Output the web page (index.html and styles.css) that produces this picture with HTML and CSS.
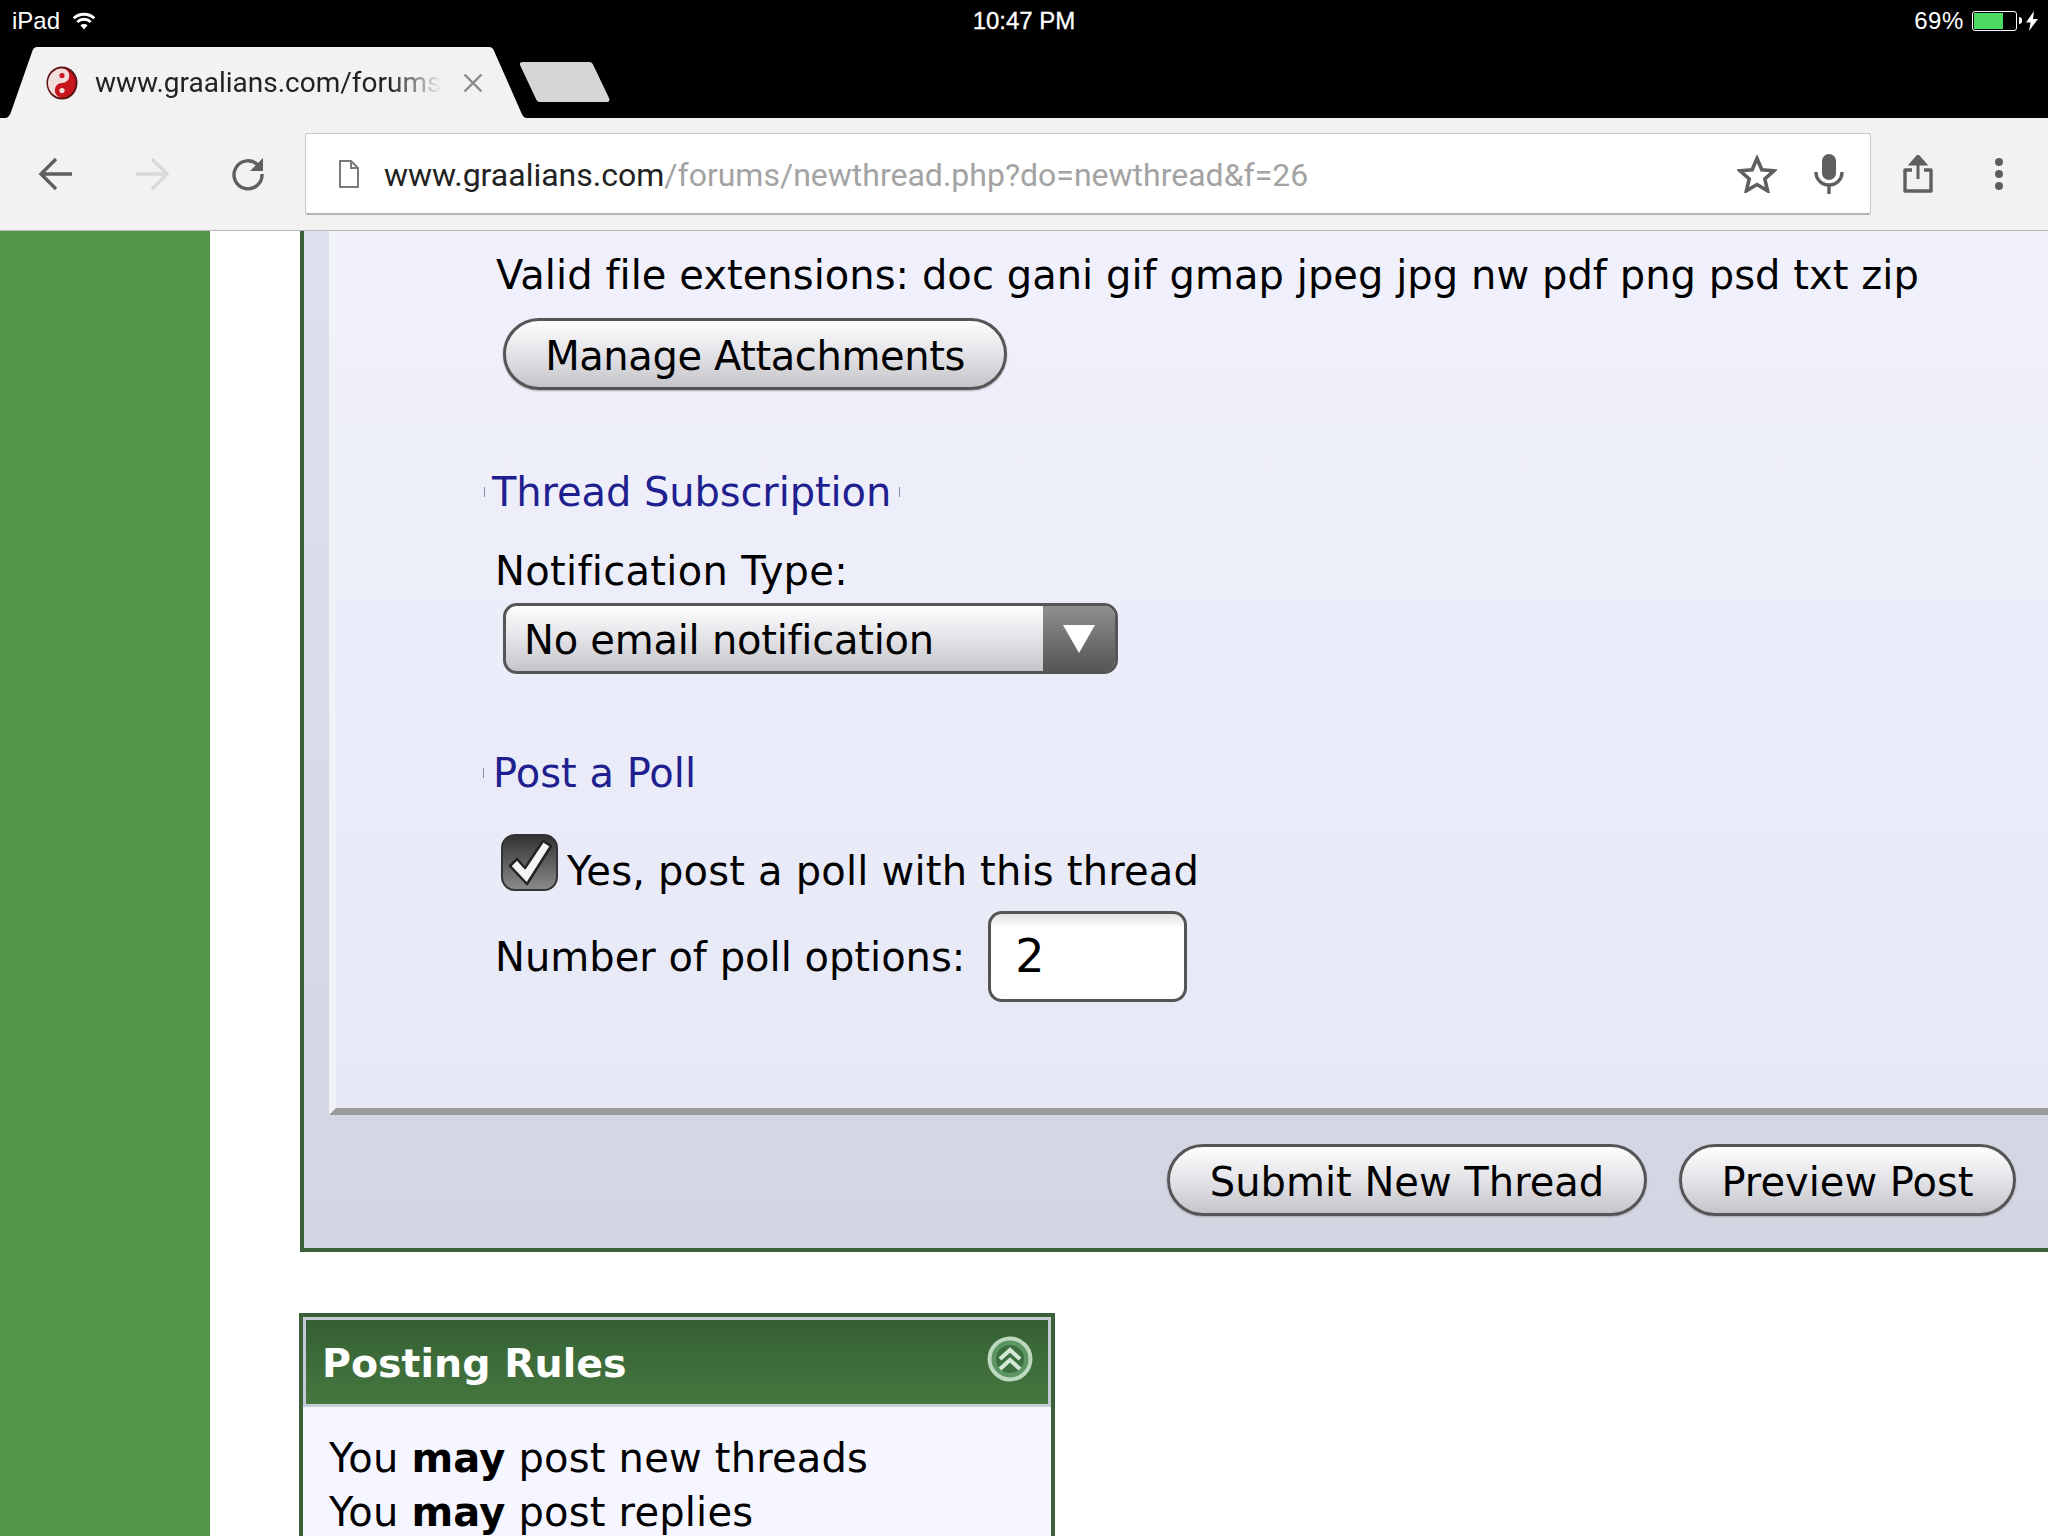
FILE: index.html
```html
<!DOCTYPE html>
<html lang="en">
<head>
<meta charset="utf-8">
<title>Post New Thread</title>
<link rel="stylesheet" href="styles.css">
</head>
<body>
<div class="device">
  <header class="status">
    <div class="status-left">
      <span>iPad</span>
      <svg class="wifi" width="26" height="21" viewBox="0 0 24 20"><path d="M12 18.500 8.600 14.600a5 5 0 0 1 6.800 0Z" fill="#fff"/><path d="M5.600 11.400a9.400 9.400 0 0 1 12.800 0M2.200 7.900a14.400 14.400 0 0 1 19.600 0" fill="none" stroke="#fff" stroke-width="2.800"/></svg>
    </div>
    <div class="status-time">10:47 PM</div>
    <div class="status-right">
      <span>69%</span>
      <div class="battery"><div class="battery-fill"></div></div>
      <div class="battery-tip"></div>
      <svg class="bolt" width="12" height="20" viewBox="0 0 12 20"><path d="M8 0 0 11.500h4.600L3 20l9-12H7Z" fill="#fff"/></svg>
    </div>
  </header>

  <div class="tabstrip">
    <div class="tab">
      <svg class="tab-shape" width="530" height="71" viewBox="0 0 530 71"><path d="M0 71q4 0 6-6L27 5q1.500-5 5-5H484q4 0 5.500 5L516 65q2 6 6 6Z" fill="#f2f2f2"/></svg>
      <svg class="favicon" width="32" height="34" viewBox="0 0 32 34"><ellipse cx="16" cy="17" rx="15.500" ry="16.500" fill="#5b1414"/><ellipse cx="16" cy="17" rx="13.500" ry="14.500" fill="#c8141c"/><path d="M16 2.500a7.200 7.200 0 0 1 0 14.500 7.200 7.200 0 0 0 0 14.500A14 14.500 0 0 0 16 2.500Z" fill="#f3dede" transform="rotate(180 16 17)"/><circle cx="16" cy="9.500" r="2.600" fill="#c8141c"/><circle cx="16" cy="24.500" r="2.600" fill="#f3dede"/></svg>
      <span class="tab-title">www.graalians.com/forums/</span>
      <svg class="tab-close" width="20" height="20" viewBox="0 0 20 20"><path d="M1.500 1.500l17 17M18.500 1.500l-17 17" stroke="#8a8a8a" stroke-width="2.400" fill="none"/></svg>
    </div>
    <svg class="new-tab" width="90" height="40" viewBox="0 0 90 40"><path d="M3 0H70q2 0 3 2.500L89 36q1.500 4-2 4H20q-3 0-4-3L0 3q-1-3 3-3Z" fill="#d6d6d6"/></svg>
  </div>

  <nav class="toolbar">
    <div class="nav-buttons">
      <svg width="36" height="36" viewBox="0 0 36 36"><path d="M34 18H4M18 3 3 18l15 15" fill="none" stroke="#5f5f5f" stroke-width="3.400"/></svg>
      <svg width="36" height="36" viewBox="0 0 36 36"><path d="M2 18h30M18 3l15 15-15 15" fill="none" stroke="#d9d9d9" stroke-width="3.400"/></svg>
      <svg width="36" height="36" viewBox="0 0 36 36"><path d="M28.500 9.500A14 14 0 1 0 32 18" fill="none" stroke="#5f5f5f" stroke-width="3.400"/><path d="M33 2v13H20Z" fill="#5f5f5f"/></svg>
    </div>
    <div class="omnibox">
      <svg class="doc" width="20" height="28" viewBox="0 0 20 28"><path d="M1 1h11l7 7v19H1Z M12 1v7h7" fill="none" stroke="#7a7a7a" stroke-width="2"/></svg>
      <div class="url"><span class="url-host">www.graalians.com</span>/forums/newthread.php?do=newthread&amp;f=26</div>
      <svg class="star" width="40" height="38" viewBox="0 0 40 38"><path d="M20 3.500l4.800 11.200 12.200 1.100-9.200 8 2.800 12L20 29.500 9.400 35.800l2.800-12-9.200-8 12.200-1.100Z" fill="none" stroke="#5f5f5f" stroke-width="3.600"/></svg>
      <svg class="mic" width="30" height="40" viewBox="0 0 30 40"><rect x="8" y="0" width="14" height="26" rx="7" fill="#5f5f5f"/><path d="M2 18c0 8 6 13 13 13s13-5 13-13M15 31v9" fill="none" stroke="#5f5f5f" stroke-width="3.400"/></svg>
    </div>
    <svg class="share" width="30" height="38" viewBox="0 0 30 38"><path d="M15 2v22M8 9l7-8 7 8Z" fill="#5f5f5f" stroke="#5f5f5f" stroke-width="3"/><path d="M9 15H2v21h26V15h-7" fill="none" stroke="#5f5f5f" stroke-width="3.400" stroke-linejoin="round"/></svg>
    <div class="dots"><i></i><i></i><i></i></div>
  </nav>

  <div class="page">
    <aside class="sidebar"></aside>
    <main class="main">
      <section class="panel">
        <div class="panel-inner">
          <p class="text-line text-valid">Valid file extensions: doc gani gif gmap jpeg jpg nw pdf png psd txt zip</p>
          <button class="btn btn-manage" type="button">Manage Attachments</button>
          <h3 class="legend legend-both">Thread Subscription</h3>
          <p class="text-line label-notify">Notification Type:</p>
          <div class="select">
            <span class="select-value">No email notification</span>
            <span class="select-arrow"><svg width="32" height="28" viewBox="0 0 32 28"><path d="M0 0h32L16 28Z" fill="#fff"/></svg></span>
          </div>
          <h3 class="legend legend-poll">Post a Poll</h3>
          <div class="check-row">
            <span class="checkbox"><svg width="48" height="48" viewBox="0 0 48 48"><path d="M4 27l7-7 8 9L37 2l8 5-24 38Z" fill="#f4f4f4" stroke="#222" stroke-width="2.500" stroke-linejoin="round"/></svg></span>
            <span>Yes, post a poll with this thread</span>
          </div>
          <div class="options-row">
            <span>Number of poll options:</span>
            <span class="field">2</span>
          </div>
        </div>
        <div class="panel-actions">
          <button class="btn btn-submit" type="button">Submit New Thread</button>
          <button class="btn btn-preview" type="button">Preview Post</button>
        </div>
      </section>

      <section class="rules">
        <div class="rules-head">
          <span class="rules-title">Posting Rules</span>
          <svg class="collapse" width="46" height="46" viewBox="0 0 46 46"><circle cx="23" cy="23" r="20.500" fill="#5c9464" stroke="#bcd8bf" stroke-width="4"/><circle cx="23" cy="23" r="14" fill="#3d7040"/><path d="M13 23l10-9 10 9M13 33l10-9 10 9" fill="none" stroke="#d6e8d6" stroke-width="4"/></svg>
        </div>
        <div class="rules-body">
          <div>You <b>may</b> post new threads</div>
          <div>You <b>may</b> post replies</div>
        </div>
      </section>
    </main>
  </div>
</div>
</body>
</html>
```

FILE: styles.css
```css
* { box-sizing: border-box; }
html, body { margin: 0; padding: 0; background: #fff; }
.device { width: 2048px; height: 1536px; overflow: hidden; display: flex; flex-direction: column; }

.status { height: 47px; flex: none; background: #000; color: #fff; display: grid; grid-template-columns: 1fr auto 1fr; align-items: center; padding: 0 10px 6px 12px; font: 24px "Liberation Sans", Arial, sans-serif; }
.status-left { display: flex; align-items: center; gap: 11px; }
.status-time { font-weight: 500; -webkit-text-stroke: 0.3px #fff; margin-left: -2px; }
.status-right { display: flex; align-items: center; justify-content: flex-end; }
.status-right span { margin-right: 8px; letter-spacing: 0.6px; }
.battery { width: 45px; height: 20px; border: 1.500px solid #fff; border-radius: 3px; padding: 1px; }
.battery-fill { width: 29px; height: 100%; background: #4cd964; }
.battery-tip { width: 3px; height: 7px; background: #fff; border-radius: 0 3px 3px 0; margin-left: 2px; }
.bolt { margin-left: 4px; }

.tabstrip { height: 71px; flex: none; background: #000; display: flex; align-items: flex-start; padding-left: 5px; }
.tab { position: relative; width: 530px; height: 71px; flex: none; display: flex; align-items: center; padding: 0 0 0 41px; }
.tab-shape { position: absolute; inset: 0; }
.favicon { position: relative; flex: none; }
.tab-title { position: relative; width: 347px; margin-left: 17px; white-space: nowrap; overflow: hidden; font: 28px Roboto, sans-serif; color: #222; -webkit-mask-image: linear-gradient(90deg, #000 85%, transparent 100%); mask-image: linear-gradient(90deg, #000 85%, transparent 100%); }
.tab-close { position: relative; margin-left: 21px; flex: none; }
.new-tab { margin: 15px 0 0 -15px; flex: none; }

.toolbar { height: 113px; flex: none; background: #f2f2f2; border-bottom: 1px solid #b9b9b9; display: flex; align-items: center; }
.nav-buttons { width: 305px; padding-left: 38px; display: flex; gap: 60px; flex: none; }
.omnibox { width: 1566px; height: 82px; flex: none; background: #fff; border: 1px solid #c9c9c9; border-bottom: 2px solid #b5b5b5; border-radius: 3px; display: flex; align-items: center; padding: 0 26px 0 33px; }
.url { flex: 1; margin: 2px 0 0 25px; font: 32px Roboto, sans-serif; color: #a3a3a3; white-space: nowrap; }
.url-host { color: #222; }
.star { flex: none; margin-right: 37px; }
.mic { flex: none; }
.share { flex: none; margin-left: 32px; }
.dots { flex: none; margin-left: 62px; display: flex; flex-direction: column; gap: 4px; }
.dots i { display: block; width: 8px; height: 8px; border-radius: 50%; background: #5f5f5f; }

.page { flex: 1; display: flex; min-height: 0; }
.sidebar { width: 210px; flex: none; background: #529647; }
.main { flex: 1; min-width: 0; padding-left: 90px; font: 40px "DejaVu Sans", Verdana, sans-serif; color: #000; overflow: hidden; }

.panel { width: 1900px; border-left: 4px solid #3a6137; border-bottom: 4px solid #3a6137; background: linear-gradient(180deg, #dde0ee, #d2d5e2); }
.panel-inner { margin-left: 25px; height: 884px; border-left: 7px solid #f2f3f8; border-bottom: 7px solid #9c9c9c; padding: 17px 0 0 159px; background: linear-gradient(180deg, #f0f1fc, #e6e8f6); }
.text-line { margin: 0; line-height: 54px; white-space: nowrap; }
.text-valid { margin-left: 1px; letter-spacing: 0.05px; }

.btn { display: block; font: inherit; color: #000; height: 72px; padding: 3px 0 0; line-height: 62px; border: 3px solid #555; border-radius: 36px; background: linear-gradient(180deg, #fdfdfe 0%, #e6e6ea 45%, #c4c4ca 100%); box-shadow: 0 1px 2px #aaa; white-space: nowrap; }
.btn-manage { width: 504px; margin: 16px 0 0 8px; letter-spacing: -0.4px; }

.legend { position: relative; display: inline-block; margin: 0; font: inherit; line-height: 54px; color: #1f1f90; white-space: nowrap; }
.legend-both { margin: 75px 0 0 -3px; letter-spacing: -0.1px; }
.legend-both::before, .legend-both::after, .legend-poll::before { content: ""; position: absolute; top: 22px; width: 1px; height: 10px; background: #8a8aa0; }
.legend-both::before { left: -8px; }
.legend-both::after { right: -9px; }
.legend-poll { margin: 72px 0 0 -2px; }
.legend-poll::before { left: -10px; }

.label-notify { margin-top: 25px; letter-spacing: 0.3px; }

.select { width: 615px; height: 71px; margin: 5px 0 0 8px; border: 3px solid #555; border-radius: 14px; display: flex; align-items: stretch; overflow: hidden; background: linear-gradient(180deg, #fdfdfe 0%, #e6e6ea 45%, #c4c4ca 100%); }
.select-value { flex: 1; padding-left: 18px; line-height: 69px; white-space: nowrap; letter-spacing: -0.25px; }
.select-arrow { width: 72px; flex: none; display: flex; align-items: center; justify-content: center; background: linear-gradient(180deg, #8f8f8f, #555); }

.check-row { display: flex; align-items: flex-end; margin: 34px 0 0 6px; line-height: 54px; white-space: nowrap; letter-spacing: 0.2px; }
.checkbox { width: 57px; height: 57px; flex: none; margin: 0 9px 7px 0; border-radius: 14px; border: 2px solid #333; background: linear-gradient(180deg, #333, #8a8a8a); display: flex; align-items: center; justify-content: center; }
.options-row { display: flex; align-items: center; margin-top: 13px; white-space: nowrap; }
.field { width: 199px; height: 91px; margin-left: 23px; padding-left: 24px; border: 3px solid #555; border-radius: 14px; background: linear-gradient(180deg, #e2e2e2 0, #fff 14px); font-size: 46px; line-height: 85px; }

.panel-actions { height: 133px; display: flex; align-items: flex-start; gap: 32px; padding: 29px 0 0 863px; }
.btn-submit { width: 480px; flex: none; }
.btn-preview { width: 337px; flex: none; }

.rules { width: 756px; margin: 61px 0 0 -1px; border: 4px solid #3a6137; background: #f5f6ff; }
.rules-head { margin: 3px 3px 0; height: 84px; display: flex; align-items: center; justify-content: space-between; padding: 0 15px 0 16px; background: linear-gradient(180deg, #356033, #45773f); color: #fff; font-weight: 700; font-size: 39.500px; box-shadow: 0 0 0 3px #c5cad6; }
.rules-title { margin-top: 2px; }
.collapse { margin-top: -7px; }
.rules-body { padding: 27px 0 0 26px; line-height: 54px; white-space: nowrap; letter-spacing: 0.2px; }
.rules-body b { font-weight: 700; }
```
